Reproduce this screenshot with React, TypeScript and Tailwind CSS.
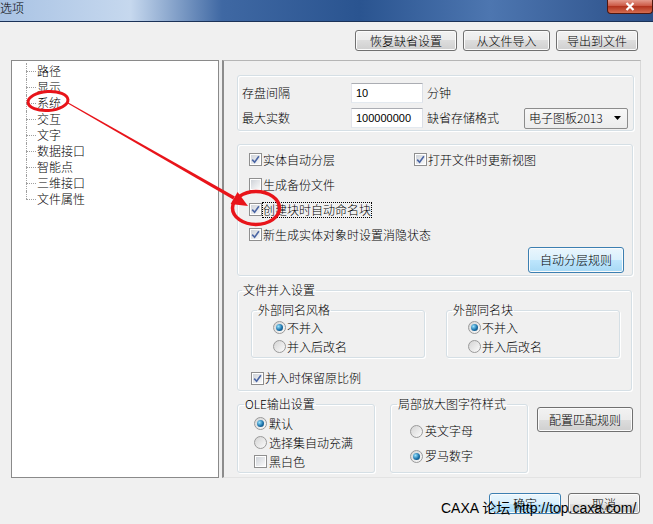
import React from 'react';

const cjk = "font-['Noto_Sans_CJK_SC','Liberation_Sans',sans-serif] font-light";

const CheckBox = ({ checked }: { checked?: boolean }) => (
  <span className="flex h-[13px] w-[13px] shrink-0 items-center justify-center border border-[#8f8f8f] bg-white p-[1px]">
    <span className="flex h-full w-full items-center justify-center bg-gradient-to-br from-[#cfd3d9] to-[#fafafa]">
      {checked && (
        <svg width="9" height="9" viewBox="0 0 9 9">
          <path d="M1.2 4.6 L3.6 7.2 L7.9 1.2" fill="none" stroke="#4a65a4" strokeWidth="1.6" />
        </svg>
      )}
    </span>
  </span>
);

const Radio = ({ checked }: { checked?: boolean }) => (
  <span className="flex h-[13px] w-[13px] shrink-0 items-center justify-center rounded-full border border-[#9a9a9a] bg-gradient-to-br from-[#d4d4d4] to-[#fbfbfb]">
    {checked && (
      <span className="h-[7px] w-[7px] rounded-full bg-[radial-gradient(circle_at_35%_35%,#9ae4ff,#1b72aa_55%,#093a62)]" />
    )}
  </span>
);

const Btn = ({ children, hot, className = '' }: { children: React.ReactNode; hot?: boolean; className?: string }) => (
  <button
    type="button"
    className={`flex shrink-0 items-center justify-center rounded-[3px] border text-[12px] text-black shadow-[inset_0_0_0_1px_#fbfbfb] ${
      hot
        ? 'border-[#3c7fb1] bg-[linear-gradient(#eaf6fd,#d9f0fc_50%,#bee6fd_50%,#a7d9f5)]'
        : 'border-[#707070] bg-[linear-gradient(#f2f2f2,#ebebeb_50%,#dddddd_50%,#cfcfcf)]'
    } ${className}`}
  >
    {children}
  </button>
);

const TextBox = ({ value }: { value: string }) => (
  <div className="flex h-[20px] w-[72px] shrink-0 items-center border border-[#abadb3] border-b-[#e3e9ef] border-l-[#e2e3ea] border-r-[#dbdfe6] bg-white pl-[4px] font-['Liberation_Sans',sans-serif] text-[11px] font-normal">
    {value}
  </div>
);

const treeItems = ['路径', '显示', '系统', '交互', '文字', '数据接口', '智能点', '三维接口', '文件属性'];

const Group = ({ className = '', children }: { className?: string; children: React.ReactNode }) => (
  <div className={`shrink-0 rounded-[3px] border border-[#d5dfe5] shadow-[inset_1px_1px_0_#fff,1px_1px_0_#fff] ${className}`}>
    {children}
  </div>
);

const Field = ({ title, className = '', legendClass = 'ml-[5px]', children }: { title: string; className?: string; legendClass?: string; children: React.ReactNode }) => (
  <fieldset className={`m-0 shrink-0 rounded-[3px] border border-[#d5dfe5] p-0 shadow-[inset_1px_1px_0_#fff,1px_1px_0_#fff] ${className}`}>
    <legend className={`px-[1px] leading-[14px] ${legendClass}`}>{title}</legend>
    {children}
  </fieldset>
);

const App: React.FC = () => {
  return (
    <div className={`relative h-[524px] w-[653px] overflow-hidden bg-[#f0f0f0] text-[12px] text-black ${cjk}`}>
      {/* title bar */}
      <div className="flex h-[22px] items-start justify-between border-b border-[#1b3258] bg-[linear-gradient(to_right,#a9c3e4,#c6d8ee_20%,#3f68a3_34%,#2a5490_55%,#4d76b0_75%,#2b4f88)]">
        <span className="leading-[16px]">选项</span>
        <div className="flex h-[14px] w-[46px] items-center justify-center rounded-b-[4px] border border-t-0 border-[#4e1710] bg-[linear-gradient(#e49a8c,#c9523d_50%,#b3341f_50%,#d46d50)]">
          <svg width="10" height="9" viewBox="0 0 10 9">
            <path d="M1.5 1 L8.5 8 M8.5 1 L1.5 8" stroke="#fff" strokeWidth="2.2" />
          </svg>
        </div>
      </div>

      {/* top buttons */}
      <div className="flex justify-end gap-[6px] pb-[9px] pr-[15px] pt-[8px]">
        <Btn className="h-[21px] w-[102px]">恢复缺省设置</Btn>
        <Btn className="h-[21px] w-[87px]">从文件导入</Btn>
        <Btn className="h-[21px] w-[82px]">导出到文件</Btn>
      </div>

      {/* main */}
      <div className="flex h-[418px] pl-[11px]">
        <div className="w-[208px] border border-[#8a8a8a] bg-white pl-[14px] pt-[2px]">
          {treeItems.map((t, i) => (
            <div key={t} className="flex h-[16px] items-stretch leading-[16px]">
              <span className="flex w-[10px] flex-col">
                <span className="h-[8px] border-l border-dotted border-[#a0a0a0]" />
                <span
                  className={`h-[8px] border-t border-dotted border-[#a0a0a0] ${
                    i < treeItems.length - 1 ? 'border-l' : ''
                  }`}
                />
              </span>
              <span className="ml-[1px]">{t}</span>
            </div>
          ))}
        </div>

        <div className="ml-[3px] flex w-[419px] flex-col border-b border-l-2 border-r border-t border-b-[#e3e3e3] border-l-[#8c8c8c] border-r-[#d8d8d8] border-t-[#b5b5b5] pl-[13px] pt-[14px]">
          {/* group 1 */}
          <Group className="h-[56px] w-[397px]">
            <div className="flex flex-col gap-[5px] pl-[4px] pt-[7px]">
              <div className="flex h-[20px] items-center">
                <span className="w-[109px]">存盘间隔</span>
                <TextBox value="10" />
                <span className="ml-[4px]">分钟</span>
              </div>
              <div className="flex h-[20px] items-center">
                <span className="w-[109px]">最大实数</span>
                <TextBox value="100000000" />
                <span className="ml-[4px] w-[97px]">缺省存储格式</span>
                <div className="flex h-[21px] w-[104px] items-center justify-between rounded-[2px] border border-[#8c8c8c] bg-[linear-gradient(#f7f7f7,#ececec)] pl-[4px] pr-[6px]">
                  <span>电子图板2013</span>
                  <svg width="7" height="4" viewBox="0 0 7 4">
                    <path d="M0 0 L7 0 L3.5 4 Z" fill="#000" />
                  </svg>
                </div>
              </div>
            </div>
          </Group>

          {/* group 2 */}
          <Group className="mt-[13px] h-[132px] w-[396px]">
            <div className="flex flex-col pl-[11px] pt-[2px]">
              <div className="flex h-[25px] items-center">
                <span className="flex w-[165px] items-center gap-[1px]">
                  <CheckBox checked />
                  <span>实体自动分层</span>
                </span>
                <span className="flex items-center gap-[1px]">
                  <CheckBox checked />
                  <span>打开文件时更新视图</span>
                </span>
              </div>
              <div className="flex h-[25px] items-center gap-[1px]">
                <CheckBox />
                <span>生成备份文件</span>
              </div>
              <div className="flex h-[25px] items-center">
                <CheckBox checked />
                <span className="border border-dotted border-black leading-[14px]">创建块时自动命名块</span>
              </div>
              <div className="flex h-[25px] items-center gap-[1px]">
                <CheckBox checked />
                <span>新生成实体对象时设置消隐状态</span>
              </div>
              <div className="flex justify-end pr-[8px]">
                <Btn hot className="h-[26px] w-[96px]">
                  自动分层规则
                </Btn>
              </div>
            </div>
          </Group>

          {/* group 3 */}
          <Field title="文件并入设置" legendClass="ml-[4px]" className="mt-[7px] h-[108px] w-[395px]">
            <div className="pl-[13px] pt-[6px]">
              <div className="flex gap-[21px]">
                {['外部同名风格', '外部同名块'].map((t) => (
                  <Field key={t} title={t} className="h-[55px] w-[174px]">
                    <div className="flex flex-col pl-[21px] pt-[1px]">
                      <div className="flex h-[19px] items-center gap-[1px]">
                        <Radio checked />
                        <span>不并入</span>
                      </div>
                      <div className="flex h-[19px] items-center gap-[1px]">
                        <Radio />
                        <span>并入后改名</span>
                      </div>
                    </div>
                  </Field>
                ))}
              </div>
              <div className="mt-[12px] flex h-[16px] items-center gap-[1px]">
                <CheckBox checked />
                <span>并入时保留原比例</span>
              </div>
            </div>
          </Field>

          {/* bottom groups */}
          <div className="mt-[6px] flex items-start">
            <Field title="OLE输出设置" legendClass="ml-[6px]" className="h-[76px] w-[138px]">
              <div className="flex flex-col pl-[16px] pt-[3px]">
                <div className="flex h-[19px] items-center gap-[2px]">
                  <Radio checked />
                  <span>默认</span>
                </div>
                <div className="flex h-[19px] items-center gap-[2px]">
                  <Radio />
                  <span>选择集自动充满</span>
                </div>
                <div className="flex h-[19px] items-center gap-[2px]">
                  <CheckBox />
                  <span>黑白色</span>
                </div>
              </div>
            </Field>
            <Field title="局部放大图字符样式" legendClass="ml-[6px]" className="ml-[15px] h-[76px] w-[138px]">
              <div className="flex flex-col gap-[5px] pl-[19px] pt-[10px]">
                <div className="flex h-[20px] items-center gap-[2px]">
                  <Radio />
                  <span>英文字母</span>
                </div>
                <div className="flex h-[20px] items-center gap-[2px]">
                  <Radio checked />
                  <span>罗马数字</span>
                </div>
              </div>
            </Field>
            <Btn className="ml-[9px] mt-[10px] h-[25px] w-[96px]">配置匹配规则</Btn>
          </div>
        </div>
      </div>

      {/* dialog buttons */}
      <div className="flex justify-end gap-[7px] pr-[13px] pt-[15px]">
        <Btn hot className="h-[21px] w-[72px]">
          确定
        </Btn>
        <Btn className="h-[21px] w-[72px]">取消</Btn>
      </div>

      {/* watermark */}
      <div className="absolute left-[441px] top-[500px] whitespace-nowrap font-['Liberation_Sans','Noto_Sans_CJK_SC',sans-serif] text-[14px] font-normal leading-[16px] text-black">
        CAXA 论坛 http://top.caxa.com/
      </div>

      {/* red annotation */}
      <svg className="pointer-events-none absolute left-0 top-0" width="653" height="524" viewBox="0 0 653 524">
        <ellipse cx="48" cy="101" rx="20" ry="9.5" fill="none" stroke="#e8141a" strokeWidth="3" transform="rotate(-4 48 101)" />
        <polygon points="67.75,103.43 68.25,102.57 234.87,196.48 233.13,199.52" fill="#e8141a" />
        <polygon points="248,206 230.6,204.1 237.6,192" fill="#e8141a" />
        <ellipse cx="256" cy="208" rx="23.5" ry="16.5" fill="none" stroke="#e8141a" strokeWidth="3.5" />
      </svg>
    </div>
  );
};

export default App;
